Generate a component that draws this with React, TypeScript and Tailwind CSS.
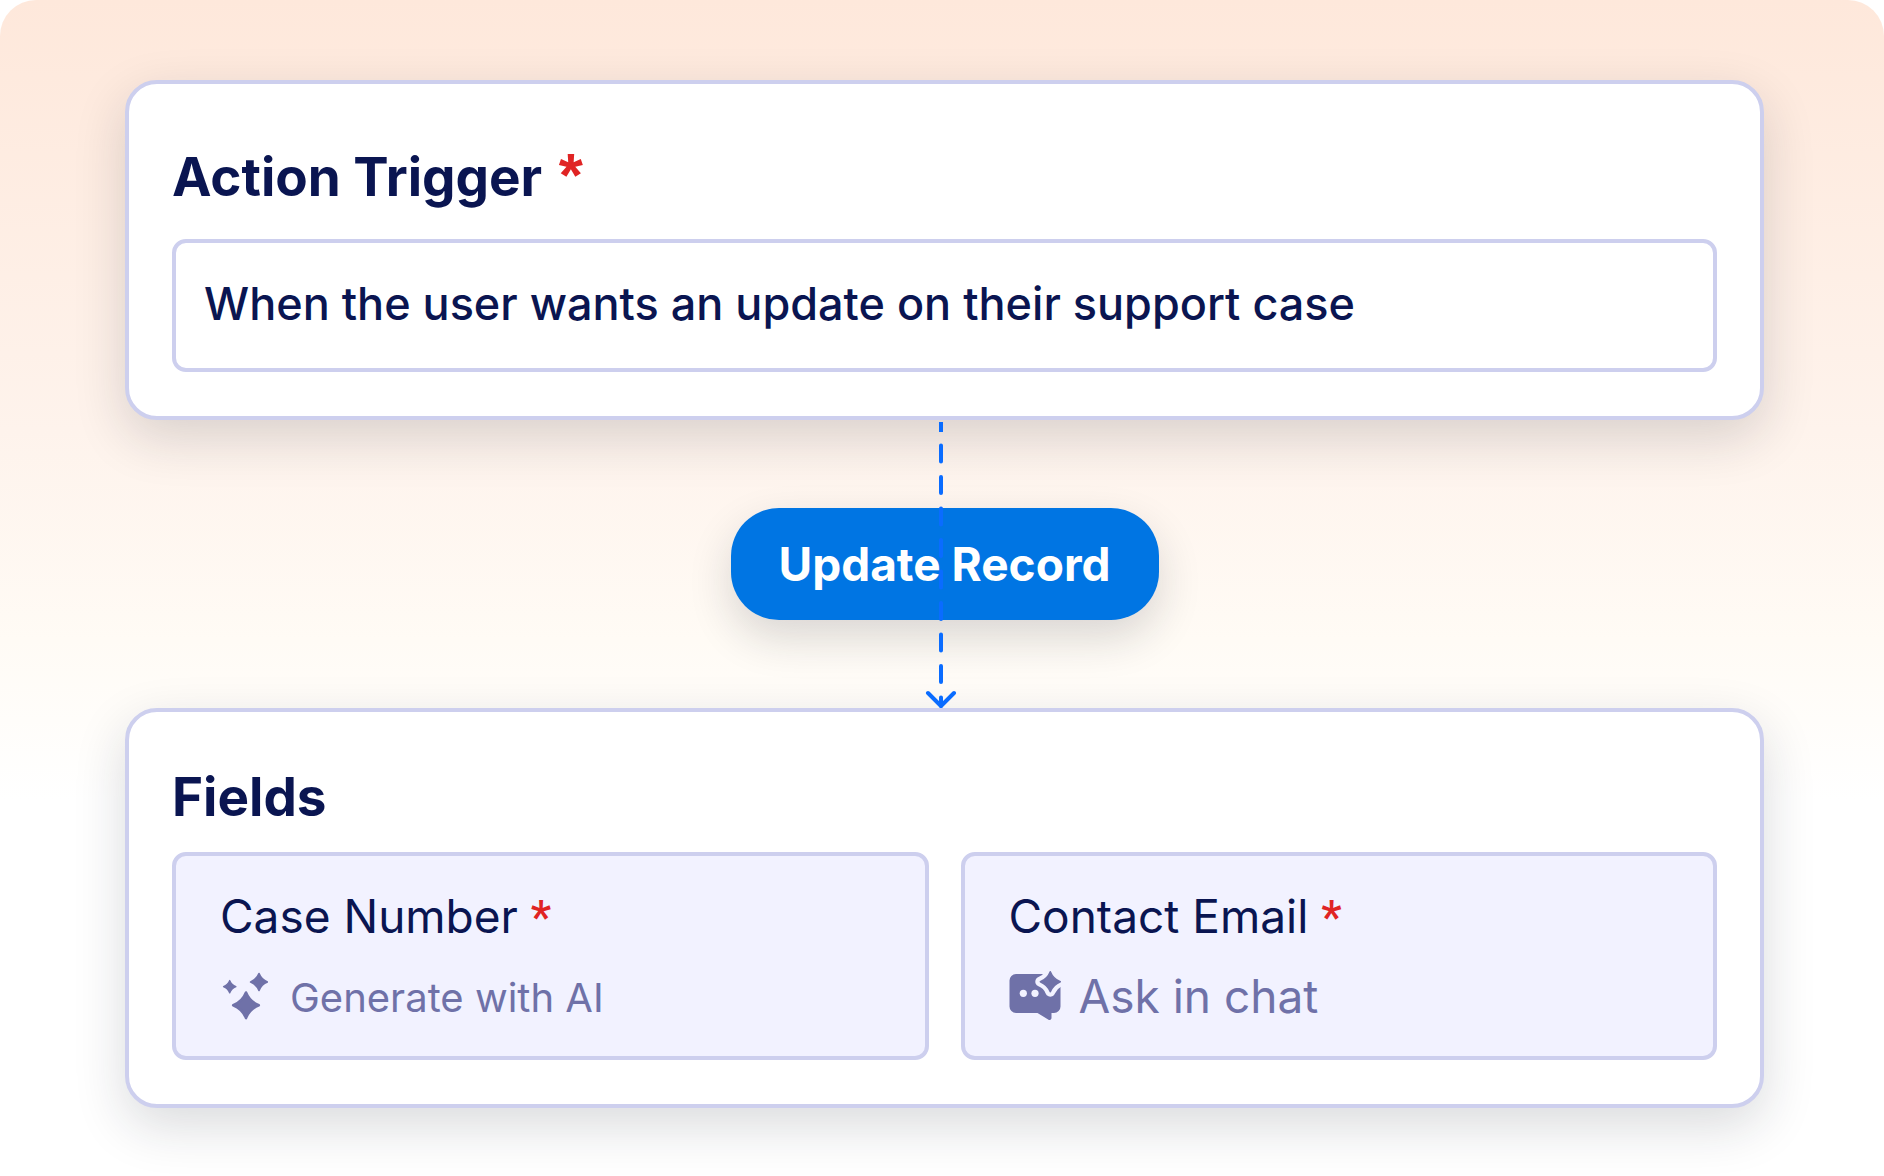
import React from 'react';

const STAR = 'M0 -10 C2 -5 5 -2 10 0 C5 2 2 5 0 10 C-2 5 -5 2 -10 0 C-5 -2 -2 -5 0 -10 Z';

function SparklesIcon() {
  return (
    <svg viewBox="0 0 48 48" className="size-12 shrink-0" fill="#6f71a8" stroke="#6f71a8" strokeWidth="2" strokeLinejoin="round" aria-hidden="true">
      <path d={STAR} transform="translate(26 33.3) scale(1.28)" />
      <path d={STAR} transform="translate(39 10) scale(0.84)" />
      <path d={STAR} transform="translate(9.7 14.7) scale(0.62)" />
    </svg>
  );
}

function ChatSparkleIcon() {
  return (
    <svg viewBox="0 0 52 50" className="h-[50px] w-[52px] shrink-0" fill="#6f71a8" aria-hidden="true">
      <path d="M7 3H45a6.5 6.5 0 0 1 6.5 6.5V35.5a6.5 6.5 0 0 1-6.5 6.5H42.5V47a2 2 0 0 1-3 1.7L28.5 42H7A6.5 6.5 0 0 1 .5 35.5V9.5A6.5 6.5 0 0 1 7 3Z" />
      <circle cx="14.3" cy="22.3" r="3.6" fill="#f2f2ff" />
      <circle cx="26" cy="22.3" r="3.6" fill="#f2f2ff" />
      <path d={STAR} transform="translate(41.3 10.7)" fill="#f2f2ff" stroke="#f2f2ff" strokeWidth="10" strokeLinejoin="round" />
      <path d={STAR} transform="translate(41.3 10.7)" stroke="#6f71a8" strokeWidth="1.5" strokeLinejoin="round" />
    </svg>
  );
}

function Connector() {
  return (
    <svg viewBox="0 0 32 288" className="absolute top-0 left-1/2 -ml-5 h-full w-8" fill="none" stroke="#0a6cff" strokeWidth="4" aria-hidden="true">
      <path d="M16 2V12" />
      <path d="M16 25.5V286" strokeDasharray="16 15.5" strokeLinecap="round" />
      <path d="M3 273L16 286L29 273" strokeLinecap="round" strokeLinejoin="round" />
    </svg>
  );
}

const cardClass =
  'rounded-[32px] border-4 border-[#cdcfee] bg-white px-[43px] shadow-[0_18px_52px_rgba(22,32,45,0.16)]';

function FieldCard({ label, icon, action, actionClass }: { label: string; icon: React.ReactNode; action: string; actionClass: string }) {
  return (
    <div className="min-w-0 flex-1 rounded-[14px] border-4 border-[#cdcfee] bg-[#f2f2ff] px-11 pt-[30px] pb-[26px]">
      <h3 className="text-[46px] leading-[60px]">
        {label} <span className="font-['Roboto',sans-serif] leading-none font-medium text-[#e02424]">*</span>
      </h3>
      <button type="button" className="mt-4 flex h-[68px] items-center text-[#6f71a8]">
        {icon}
        <span className={actionClass}>{action}</span>
      </button>
    </div>
  );
}

export default function App() {
  return (
    <div className="bg-white font-['Inter',sans-serif] text-[#0a1551]">
      <main className="min-h-screen rounded-[36px] bg-[linear-gradient(180deg,#fee8db_0px,#fef3ec_430px,#fffbf5_640px,#ffffff_800px)] pt-20 pr-[120px] pb-[68px] pl-[125px]">
        <section className={`${cardClass} pt-[57px] pb-11`}>
          <label htmlFor="trigger" className="block text-[53px] leading-[72px] font-bold">
            Action Trigger{' '}
            <span className="ml-1 font-['Liberation_Sans',sans-serif] text-[62px] leading-none text-[#e02424]">*</span>
          </label>
          <input
            id="trigger"
            type="text"
            defaultValue="When the user wants an update on their support case"
            className="mt-[26px] block h-[133px] w-full rounded-[14px] border-4 border-[#cdcfee] bg-white px-7 pb-1 text-[45px] font-[450] outline-none"
          />
        </section>

        <div className="relative flex h-72 items-center justify-center">
          <button type="button" className="h-28 rounded-[48px] bg-[#0075e3] px-12 text-[46px] font-bold text-white shadow-[0_18px_44px_rgba(22,32,45,0.16)]">
            <span className="relative z-10">Update Record</span>
          </button>
          <Connector />
        </div>

        <section className={`${cardClass} pt-[49px] pb-11`}>
          <h2 className="text-[53px] leading-[72px] font-bold">Fields</h2>
          <div className="mt-[19px] flex gap-8">
            <FieldCard label="Case Number" icon={<SparklesIcon />} action="Generate with AI" actionClass="ml-[22px] pt-1 text-[40px]" />
            <FieldCard label="Contact Email" icon={<ChatSparkleIcon />} action="Ask in chat" actionClass="ml-[18px] text-[46px]" />
          </div>
        </section>
      </main>
    </div>
  );
}
